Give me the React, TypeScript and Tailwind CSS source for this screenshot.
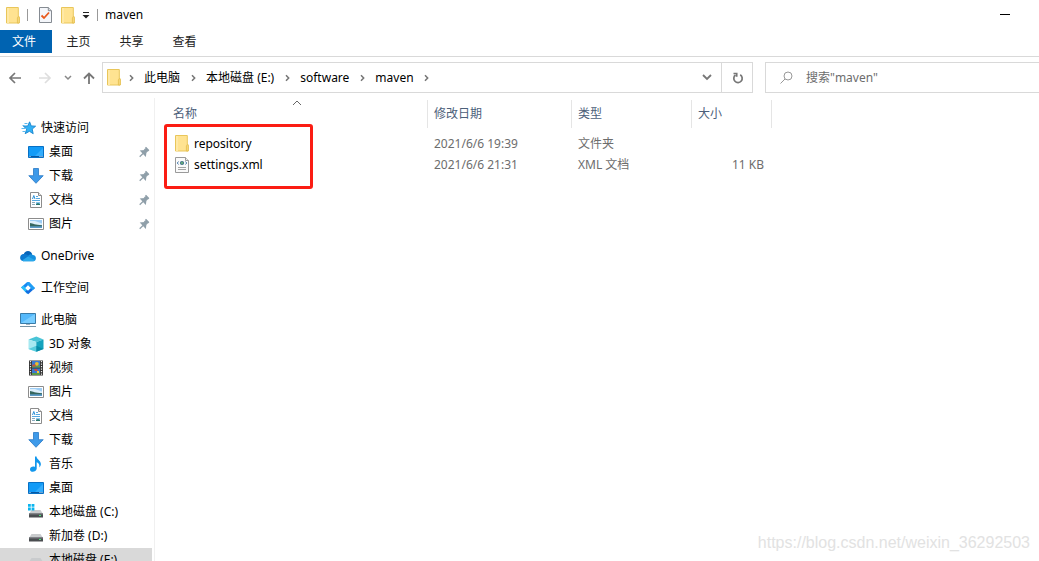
import React from "react";

type IconProps = { className?: string };

const FolderIcon = ({ className = "" }: IconProps) => (
  <svg viewBox="0 0 14 17" className={`h-[17px] w-[14px] shrink-0 ${className}`} aria-hidden="true">
    <path d="M.5.5h11.8v9.2h.9v6.3H.5z" fill="#ffe391" stroke="#e9c65a" />
    <path d="M1 1h2v15H1z" fill="#ffe9a6" />
    <path d="M11.4 16v-5.2l1-1.2.8 1.2V16z" fill="#fbe08a" stroke="#e3bb48" strokeWidth=".8" />
  </svg>
);

const CheckDocIcon = () => (
  <svg viewBox="0 0 13 16" className="h-4 w-[13px]" aria-hidden="true">
    <path d="M.5.5h8.8l3.2 3.2v11.8H.5z" fill="#f4f6fa" stroke="#858b92" />
    <path d="M9.3.5v3.2h3.2" fill="#d9dde1" stroke="#858b92" />
    <path d="M2.5 8.5 5 11l5-5.5" fill="none" stroke="#e8591c" strokeWidth="1.8" />
  </svg>
);

const StarIcon = () => (
  <svg viewBox="0 0 16 16" className="size-4" aria-hidden="true">
    <path d="m9.6 1.8 1.6 4.1 4.4.3-3.4 2.9 1 4.6-3.8-2.4-4.2 2.4 1.5-4.6-3.3-2.9 4.4-.3z" fill="#32b1f5" stroke="#1583ce" strokeWidth=".9" />
    <path d="M4.5 3.5h3M2.5 5.5h2M1.5 8.5h4M2.5 11.5h3" stroke="#5bb8ee" />
  </svg>
);

const DesktopIcon = () => (
  <svg viewBox="0 0 16 16" className="size-4" aria-hidden="true">
    <path d="M.5 2.5h15v11H.5z" fill="#129bf7" stroke="#0870c4" />
    <path d="M7 12 15 4v8z" fill="#33adfd" />
    <path d="M1 12.5h14" stroke="#0757a3" />
    <path d="M1.5 12.5h1m9 0h1m1 0h1" stroke="#d9f1ff" />
  </svg>
);

const DownloadIcon = () => (
  <svg viewBox="0 0 16 16" className="size-4" aria-hidden="true">
    <path d="M5.5.5h5v7.2h4.7L8 15.3.8 7.7h4.7z" fill="#3e9ae9" stroke="#2878c5" strokeWidth=".8" />
  </svg>
);

const DocumentIcon = () => (
  <svg viewBox="0 0 16 16" className="size-4" aria-hidden="true">
    <path d="M2.5.5h8l3 3v12h-11z" fill="#fff" stroke="#8c8c8c" />
    <path d="M10.5.5v3h3" fill="#e8e8e8" stroke="#8c8c8c" />
    <path d="M8 4.5h2M8 6.5h4M4 8.5h8" stroke="#55a9e2" />
    <path d="m4.5 7 1.3-3.5L7 7" fill="none" stroke="#2c91d8" />
    <path d="M4 10.5h3M4 12.5h3" stroke="#8baabd" />
    <path d="M8 10h4v3H8z" fill="#8bc6ed" />
    <path d="m8 12 2-1 2 1v1H8z" fill="#2a776c" />
  </svg>
);

const PictureIcon = () => (
  <svg viewBox="0 0 16 16" className="size-4" aria-hidden="true">
    <path d="M.5 2.5h15v11H.5z" fill="#fff" stroke="#8c8c8c" />
    <path d="M2 4h12v8H2z" fill="#9dcdf5" />
    <path d="M2 5h5l7 2.5V9H2z" fill="#dceefb" />
    <path d="M2 7c3 .3 5 2 12 2.2V11H2z" fill="#35665e" />
    <path d="M2 10.3h12V12H2z" fill="#5b9ac7" />
  </svg>
);

const CloudIcon = () => (
  <svg viewBox="0 0 16 16" className="size-4" aria-hidden="true">
    <path d="M3.6 7C4.2 1.7 11.4 1.5 12.2 6.5L8 11z" fill="#0664b8" />
    <path d="M3.2 6.1c2.3-.4 4 .5 6 2l-5.8 5.2C-1 13-.9 6.8 3.2 6.1z" fill="#0b79d0" />
    <path d="M8 8.5c1-2.5 3.5-2.6 4.8-1.5 4.1.1 4.1 6.3.2 6.3H3z" fill="#1590df" />
    <path d="M2 12.5 8 8.4l7.3 3.8c-.6.8-1.3 1.1-2.3 1.1H3.5z" fill="#2aa8eb" />
  </svg>
);

const WorkspaceIcon = () => (
  <svg viewBox="0 0 16 16" className="size-4" aria-hidden="true">
    <path d="m7.2 2 3 2.6-5.6 5.2L1 7.6z" fill="#1788f2" />
    <path d="m1 7.6 2.2-2L9 11l-1.8 3z" fill="#27bdf9" />
    <path d="m8.2 14.2-3-2.6 6-5.4L15 8z" fill="#126de0" />
    <path d="M7.2 2h2.2L15 8l-2.3 2.2-5.5-5z" fill="#1f9df5" />
    <path d="M8 5.2 10.8 8 8 10.8 5.2 8z" fill="#fff" />
  </svg>
);

const ComputerIcon = () => (
  <svg viewBox="0 0 16 16" className="size-4" aria-hidden="true">
    <path d="M.5 1.5h15v10H.5z" fill="#55b9fb" stroke="#397ca9" />
    <path d="M1 11 15 2v9z" fill="#79cdff" />
    <path d="M6 12h4v1H6z" fill="#a2b3be" />
    <path d="M0 14.5h16" stroke="#7893a5" />
  </svg>
);

const CubeIcon = () => (
  <svg viewBox="0 0 16 16" className="size-4" aria-hidden="true">
    <path d="m.5 3.5 7.8-3 7.2 3-7.2 2.4z" fill="#49c4d7" />
    <path d="m.5 3.5 7.8 2.4v9.8L.5 13z" fill="#a7e9f1" />
    <path d="m8.3 5.9 7.2-2.4V13l-7.2 2.7z" fill="#15a3bd" />
    <path d="m.5 13 7.8-3.2v5.9z" fill="#59cede" />
    <path d="m8.3 9.8 7.2 3.2-7.2 2.7z" fill="#078da9" />
  </svg>
);

const VideoIcon = () => (
  <svg viewBox="0 0 16 16" className="size-4" aria-hidden="true">
    <path d="M1 .5h14v15H1z" fill="#333" />
    <path d="M2.5 1v14M13.5 1v14" stroke="#eee" strokeWidth="1.2" strokeDasharray="1.3 1.2" />
    <path d="M4 1h8v6.5H4zM4 8.5h8V15H4z" fill="#3979d2" />
    <path d="M4 5.5h8v2H4zM4 13h8v2H4z" fill="#5b9b4a" />
    <circle cx="8.8" cy="3.8" r="1.9" fill="#edbd29" />
    <path d="M4.5 4.5h3v2h-3zM6 9h3l1 2H7z" fill="#d44c3c" />
    <path d="M9 11h2v2H9z" fill="#f1cb3e" />
  </svg>
);

const MusicIcon = () => (
  <svg viewBox="0 0 16 16" className="size-4" aria-hidden="true">
    <path d="M7 .4h1.5c.2 3.2 5.4 4.4 4.2 8.9-.3 1-.9 1.7-1.5 2.2.8-3.1-.8-4.3-2.5-5.2v6.4C8.3 16.3 2 16.8 2 13.4c0-2.4 2.8-3.4 5-2.5z" fill="#1297ed" />
  </svg>
);

const DriveShape = () => (
  <>
    <path d="M3.5 6h9L15 10H1z" fill="#c9cbcd" />
    <path d="M1 9.5h14v4H1z" fill="#4a4d50" />
    <path d="M1 9.5h14v1H1z" fill="#777b7e" />
    <path d="M11 11.5h2" stroke="#4be577" />
  </>
);

const DriveIcon = () => (
  <svg viewBox="0 0 16 16" className="size-4" aria-hidden="true"><DriveShape /></svg>
);

const SystemDriveIcon = () => (
  <svg viewBox="0 0 16 16" className="size-4" aria-hidden="true">
    <DriveShape />
    <path d="M0 0h2.8v2.8H0zm3.6 0h2.8v2.8H3.6zM0 3.6h2.8v2.8H0zm3.6 0h2.8v2.8H3.6z" fill="#0ab5ef" />
  </svg>
);

const PinIcon = () => (
  <svg viewBox="0 0 11 12" className="h-3 w-[11px]" aria-hidden="true">
    <path d="m6.5 1.3 3.4 3.5M7.3 2 5 4.7 2.1 5l4.3 4.5.4-3L9.3 4z" fill="#8f9fa9" stroke="#8f9fa9" strokeWidth="1.3" />
    <path d="M4.3 7.2.7 10.7" stroke="#8f9fa9" strokeWidth="1.2" />
  </svg>
);

const XmlIcon = () => (
  <svg viewBox="0 0 14 16" className="h-4 w-[14px] shrink-0" aria-hidden="true">
    <path d="M.5.5h10l3 3v12H.5z" fill="#fafafa" stroke="#9a9a9a" />
    <path d="M10.5.5v3h3" fill="#eee" stroke="#9a9a9a" />
    <path d="M3.5 4.5 2.3 6l1.2 1.5m7-3L11.7 6l-1.2 1.5" fill="none" stroke="#477bad" />
    <circle cx="7" cy="6" r="2.1" fill="#3f7184" />
    <circle cx="7" cy="6" r=".9" fill="#74c275" />
    <path d="M3 10.5h8M3 12.5h8" stroke="#a5a5a5" />
  </svg>
);

const Chevron = () => (
  <span className="flex w-[26px] shrink-0 items-center justify-center">
    <svg viewBox="0 0 5 8" className="h-2 w-[5px]" aria-hidden="true">
      <path d="m1 1.2 2.7 2.8L1 6.8" fill="none" stroke="#757575" strokeWidth="1.5" />
    </svg>
  </span>
);

type NavItem = { label: string; icon: () => React.ReactElement; root?: boolean; pinned?: boolean; selected?: boolean };

const groups: NavItem[][] = [
  [
    { label: "快速访问", icon: StarIcon, root: true },
    { label: "桌面", icon: DesktopIcon, pinned: true },
    { label: "下载", icon: DownloadIcon, pinned: true },
    { label: "文档", icon: DocumentIcon, pinned: true },
    { label: "图片", icon: PictureIcon, pinned: true },
  ],
  [{ label: "OneDrive", icon: CloudIcon, root: true }],
  [{ label: "工作空间", icon: WorkspaceIcon, root: true }],
  [
    { label: "此电脑", icon: ComputerIcon, root: true },
    { label: "3D 对象", icon: CubeIcon },
    { label: "视频", icon: VideoIcon },
    { label: "图片", icon: PictureIcon },
    { label: "文档", icon: DocumentIcon },
    { label: "下载", icon: DownloadIcon },
    { label: "音乐", icon: MusicIcon },
    { label: "桌面", icon: DesktopIcon },
    { label: "本地磁盘 (C:)", icon: SystemDriveIcon },
    { label: "新加卷 (D:)", icon: DriveIcon },
    { label: "本地磁盘 (E:)", icon: DriveIcon, selected: true },
  ],
];

const files = [
  { name: "repository", date: "2021/6/6 19:39", type: "文件夹", size: "", icon: FolderIcon },
  { name: "settings.xml", date: "2021/6/6 21:31", type: "XML 文档", size: "11 KB", icon: XmlIcon },
];

const crumbs = ["此电脑", "本地磁盘 (E:)", "software", "maven"];

function TitleBar() {
  return (
    <header className="flex h-[30px] shrink-0 items-center pr-7 pl-[6px]">
      <FolderIcon />
      <span className="ml-[7px] h-3 w-px bg-[#999]" />
      <button aria-label="属性" className="ml-[11px]"><CheckDocIcon /></button>
      <button aria-label="新建文件夹" className="ml-[9px]"><FolderIcon /></button>
      <button aria-label="自定义快速访问工具栏" className="ml-[7px]">
        <svg viewBox="0 0 8 8" className="size-2" aria-hidden="true">
          <path d="M1 1.5h6" stroke="#222" />
          <path d="M.5 4h7L4 7.5z" fill="#222" />
        </svg>
      </button>
      <span className="ml-[7px] h-3 w-px bg-[#999]" />
      <h1 className="ml-[7px]">maven</h1>
      <button aria-label="最小化" className="ml-auto flex h-full items-center">
        <svg viewBox="0 0 12 12" className="size-3" aria-hidden="true"><path d="M1 5.5h10" stroke="#000" /></svg>
      </button>
    </header>
  );
}

function AddressRow() {
  return (
    <div className="flex h-[41px] shrink-0 items-start pt-[5px]">
      <div className="flex h-[31px] w-[102px] shrink-0 items-center pl-2">
        <button aria-label="后退">
          <svg viewBox="0 0 14 12" className="h-3 w-[14px]" fill="none" stroke="#777" strokeWidth="1.7"><path d="M13 6H2m5-5L2 6l5 5" /></svg>
        </button>
        <button aria-label="前进" className="ml-4">
          <svg viewBox="0 0 14 12" className="h-3 w-[14px]" fill="none" stroke="#dedede" strokeWidth="1.7"><path d="M1 6h11M7 1l5 5-5 5" /></svg>
        </button>
        <button aria-label="最近浏览的位置" className="ml-3">
          <svg viewBox="0 0 8 6" className="h-[6px] w-2" fill="none" stroke="#888" strokeWidth="1.5"><path d="m1 1 3 3 3-3" /></svg>
        </button>
        <button aria-label="上移" className="ml-[11px]">
          <svg viewBox="0 0 12 12" className="size-3" fill="none" stroke="#777" strokeWidth="1.8"><path d="M6 12V1.5M1 6.5l5-5 5 5" /></svg>
        </button>
      </div>
      <div className="flex h-[31px] min-w-0 flex-1 border border-[#d9d9d9]">
        <nav aria-label="地址" className="flex min-w-0 flex-1 items-center overflow-hidden pl-1 whitespace-nowrap">
          <FolderIcon className="-mr-[3px]" />
          {crumbs.map((c) => (
            <React.Fragment key={c}>
              <Chevron />
              <button>{c}</button>
            </React.Fragment>
          ))}
          <Chevron />
        </nav>
        <button aria-label="历史记录" className="flex w-7 items-center justify-center">
          <svg viewBox="0 0 10 7" className="h-[7px] w-[10px]" fill="none" stroke="#777" strokeWidth="1.8"><path d="m1 1 4 4 4-4" /></svg>
        </button>
        <button aria-label="刷新" className="flex w-[31px] items-center justify-center border-l border-[#d9d9d9] pl-px">
          <svg viewBox="0 0 12 12" className="size-3" fill="none" stroke="#777" strokeWidth="1.7">
            <path d="M8.2 2.8A4.2 4.2 0 1 1 3.5 3" />
            <path d="M1.5 1.5h3.2v3.2" />
          </svg>
        </button>
      </div>
      <label className="ml-3 flex h-[31px] w-[274px] shrink-0 items-center border border-r-0 border-[#d9d9d9] pl-[13px]">
        <svg viewBox="0 0 14 14" className="size-[14px]" fill="none" stroke="#999" aria-hidden="true">
          <circle cx="9" cy="5" r="4" /><path d="M6 8 1.5 12.5" />
        </svg>
        <input aria-label="搜索" placeholder={'搜索"maven"'} className="ml-[13px] min-w-0 flex-1 bg-transparent outline-none placeholder:text-[#6d6d6d]" />
      </label>
    </div>
  );
}

function Sidebar() {
  return (
    <nav aria-label="导航窗格" className="flex w-[155px] shrink-0 flex-col gap-2 overflow-hidden border-r border-[#f0f0f0] pt-[18px] pr-[2px]">
      {groups.map((group, i) => (
        <ul key={i}>
          {group.map(({ label, icon: Icon, root, pinned, selected }) => (
            <li key={label}>
              <button className={`flex h-6 w-full items-center gap-[5px] pr-[2px] text-left ${root ? "pl-5" : "pl-7"} ${selected ? "bg-[#d9d9d9]" : ""}`}>
                <Icon />
                <span className="flex-1 whitespace-nowrap">{label}</span>
                {pinned && <PinIcon />}
              </button>
            </li>
          ))}
        </ul>
      ))}
    </nav>
  );
}

function FileList() {
  return (
    <main className="min-w-0 flex-1 overflow-hidden pt-[2px]">
      <div className="relative">
        <table className="w-[617px] table-fixed border-separate border-spacing-0 text-left">
          <colgroup>
            <col className="w-[273px]" />
            <col className="w-[144px]" />
            <col className="w-[120px]" />
            <col className="w-20" />
          </colgroup>
          <thead>
            <tr className="h-7 text-[#4c607a]">
              <th className="relative border-r border-[#e5e5e5] p-0 pl-[18px] font-normal">
                名称
                <svg viewBox="0 0 10 6" className="absolute top-0 left-[137px] h-[6px] w-[10px]" fill="none" stroke="#666" aria-hidden="true"><path d="m1 5 4-4 4 4" /></svg>
              </th>
              <th className="border-r border-[#e5e5e5] p-0 pl-[6px] font-normal">修改日期</th>
              <th className="border-r border-[#e5e5e5] p-0 pl-[6px] font-normal">类型</th>
              <th className="border-r border-[#e5e5e5] p-0 pl-[6px] font-normal">大小</th>
            </tr>
          </thead>
          <tbody className="text-[#6d6d6d]">
            <tr className="h-[5px]"><td colSpan={4} className="p-0" /></tr>
            {files.map(({ name, date, type, size, icon: Icon }) => (
              <tr key={name} className="h-[21px]">
                <td className="p-0 pl-5">
                  <a href="#" className="flex items-center gap-[5px] text-black"><Icon />{name}</a>
                </td>
                <td className="p-0 pl-[6px]">{date}</td>
                <td className="p-0 pl-[6px]">{type}</td>
                <td className="p-0 pr-2 text-right">{size}</td>
              </tr>
            ))}
          </tbody>
        </table>
        <div className="pointer-events-none absolute top-6 left-[9px] h-[65px] w-[149px] rounded-[3px] border-3 border-[#fb1d13]" />
      </div>
    </main>
  );
}

export default function App() {
  return (
    <div className="relative flex h-screen flex-col overflow-hidden bg-white font-['Noto_Sans','Noto_Sans_CJK_SC',sans-serif] text-[12px] leading-4 text-black">
      <TitleBar />
      <div className="flex h-[27px] shrink-0 items-start border-b border-[#d9d9d9] text-[#222]">
        <button className="h-[23px] w-[52px] bg-[#0063b1] pt-px pr-1 text-white">文件</button>
        {["主页", "共享", "查看"].map((t) => (
          <button key={t} className="h-[23px] w-[53px] pt-px">{t}</button>
        ))}
      </div>
      <AddressRow />
      <div className="flex min-h-0 flex-1">
        <Sidebar />
        <FileList />
      </div>
      <p className="absolute right-[9px] bottom-2 font-['Liberation_Sans',sans-serif] text-[16px] leading-5 text-[#e2e2e2]">https://blog.csdn.net/weixin_36292503</p>
    </div>
  );
}
